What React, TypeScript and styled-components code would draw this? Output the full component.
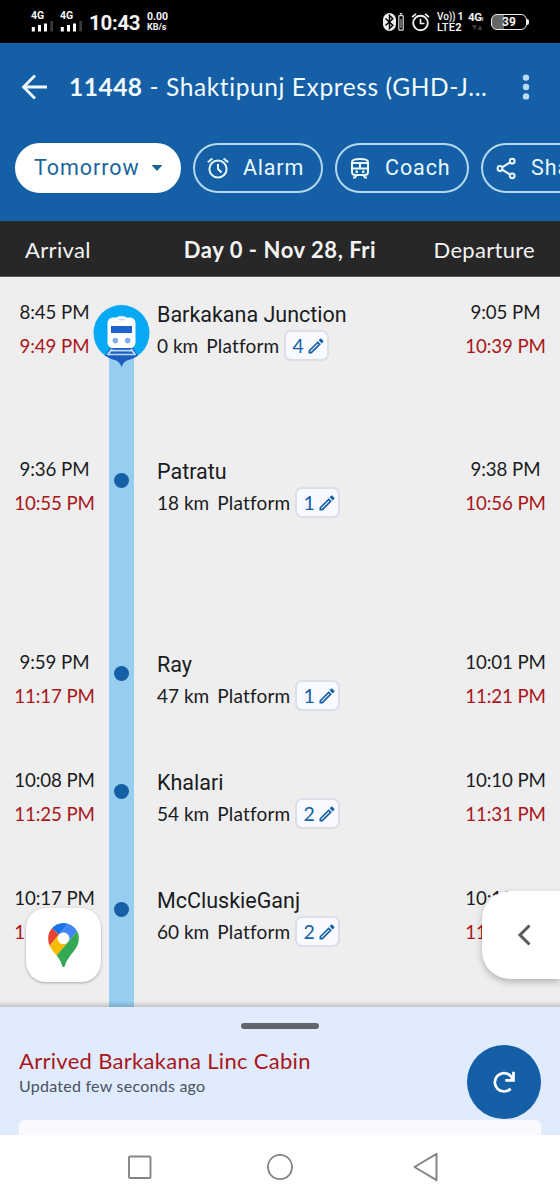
import React from "react";
import styled, { createGlobalStyle } from "styled-components";

const blue = "#145fa5";
const red = "#aa1519";
const ink = "#1a1b1e";

const GlobalStyle = createGlobalStyle`
  * { box-sizing: border-box; }
  body { margin: 0; background: #fff; font-family: Lato, "Noto Sans", sans-serif; }
  svg { display: block; flex: none; }
`;

const Screen = styled.div`
  width: 560px;
  height: 1200px;
  display: flex;
  flex-direction: column;
  overflow: hidden;
  white-space: nowrap;
`;

/* Text run with its own size, weight and tracking */
const Text = styled.span<{ $size: number; $ls?: number; $weight?: number; $color?: string; $roboto?: boolean }>`
  font-size: ${(p) => p.$size}px;
  letter-spacing: ${(p) => p.$ls ?? 0}px;
  font-weight: ${(p) => p.$weight ?? 400};
  color: ${(p) => p.$color ?? "inherit"};
  ${(p) => p.$roboto && "font-family: Roboto, sans-serif;"}
`;

/* ---------- status bar ---------- */
const StatusBar = styled.div`
  height: 43px;
  flex: none;
  background: #000;
  color: #f4f4f4;
  display: flex;
  align-items: center;
  justify-content: space-between;
  padding: 0 31px 0 31px;
  font-family: Roboto, sans-serif;
`;
const StatusGroup = styled.div`
  display: flex;
  align-items: center;
`;
const Signal = styled.div`
  width: 29px;
  display: flex;
  flex-direction: column;
  font: 700 10.5px/10px Roboto, sans-serif;
  margin-top: -1px;
`;
const Clock = styled.div`
  font: 700 20.5px/24px Roboto, sans-serif;
  letter-spacing: -0.3px;
  margin-top: 2px;
  width: 58px;
`;
const Stack = styled.div<{ $w: number; $size: number; $line?: number }>`
  width: ${(p) => p.$w}px;
  flex: none;
  display: flex;
  flex-direction: column;
  font: 700 ${(p) => p.$size}px/${(p) => p.$line ?? 10}px Roboto, sans-serif;
`;
const StackRow = styled.div`
  display: flex;
  align-items: center;
  gap: 2px;
  height: 11px;
`;
const StatusIcons = styled.svg`
  margin-right: 7px;
`;
const Battery = styled.div`
  width: 36px;
  height: 16px;
  border: 1.5px solid #eee;
  border-radius: 6px;
  background: linear-gradient(90deg, #666 0 34%, #000 34%);
  font: 700 12px/14px Roboto, sans-serif;
  text-align: center;
`;
const BatteryTip = styled.div`
  width: 2px;
  height: 6px;
  background: #eee;
  border-radius: 0 2px 2px 0;
`;

const SignalBars = () => (
  <svg width="22" height="11" viewBox="0 0 22 11">
    <rect x="0.8" y="6" width="3" height="4.5" fill="#fff" />
    <rect x="7" y="4" width="3" height="6.5" fill="#fff" />
    <rect x="13" y="2.5" width="3" height="8" fill="#fff" />
    <rect x="19.3" y="0" width="2.7" height="10.5" fill="#3a3a3a" />
  </svg>
);

/* ---------- app header ---------- */
const Header = styled.header`
  height: 178px;
  flex: none;
  background: ${blue};
  color: #f2fbff;
`;
const TitleRow = styled.div`
  height: 88px;
  display: flex;
  align-items: center;
  padding: 0 30px 0 21px;
`;
const Title = styled.h1`
  margin: 0 0 0 21px;
  flex: 1;
  line-height: 32px;
  font-weight: 400;
  display: flex;
`;
const Chips = styled.div`
  display: flex;
  gap: 12px;
  padding: 12px 0 0 15px;
`;
const Chip = styled.button<{ $w: number; $solid?: boolean }>`
  width: ${(p) => p.$w}px;
  height: 50px;
  flex: none;
  display: flex;
  align-items: center;
  border-radius: 25px;
  border: 2px solid ${(p) => (p.$solid ? "#fff" : "#b4d8ef")};
  background: ${(p) => (p.$solid ? "#fff" : "transparent")};
  color: ${(p) => (p.$solid ? "#1a659b" : "#e8f8ff")};
  padding: 0 0 1px ${(p) => (p.$solid ? 17 : 11)}px;
  gap: ${(p) => (p.$solid ? 11 : 13)}px;
`;

const Columns = styled.div`
  height: 56px;
  flex: none;
  background: #272727;
  border-bottom: 1px solid #555;
  color: #f4f4f4;
  display: grid;
  grid-template-columns: 1fr auto 1fr;
  align-items: center;
  padding: 1px 25px 0 25px;

  > :last-child {
    justify-self: end;
  }
`;

/* ---------- timeline ---------- */
const Timeline = styled.main`
  height: 730px;
  flex: none;
  background: #eee;
  overflow: hidden;
  position: relative;
  color: ${ink};
`;
const Stop = styled.section<{ $h: number }>`
  height: ${(p) => p.$h}px;
  display: grid;
  grid-template-columns: 109px 25px 1fr 109px;
`;
const Times = styled.div`
  padding-top: 18px;
  display: flex;
  flex-direction: column;
  align-items: center;
  line-height: 34px;
`;
const Track = styled.div<{ $first?: boolean }>`
  background: ${(p) => (p.$first ? "linear-gradient(#eee 60px, #97ceef 60px)" : "#97ceef")};
  display: flex;
  justify-content: center;
  align-items: flex-start;
  padding-top: ${(p) => (p.$first ? 27.5 : 39)}px;
`;
const Dot = styled.div`
  width: 15px;
  height: 15px;
  border-radius: 50%;
  background: ${blue};
`;
const Place = styled.div`
  padding: 21px 0 0 23px;
`;
const Name = styled.div`
  height: 32px;
  line-height: 34px;
`;
const Detail = styled.div`
  display: flex;
  align-items: center;
  gap: 8px;
  height: 31px;
`;
const Platform = styled.div`
  width: 45px;
  height: 31px;
  border: 2px solid #dcdfea;
  border-radius: 7px;
  background: #f9faff;
  color: ${blue};
  display: flex;
  align-items: center;
  justify-content: space-between;
  padding: 0 1px 0 6px;
  margin-left: -3px;
`;

const MapButton = styled.button`
  position: absolute;
  left: 26px;
  top: 631px;
  width: 75px;
  height: 74px;
  border: 0;
  border-radius: 20px;
  background: #fff;
  box-shadow: 0 1px 3px rgba(0, 0, 0, 0.3);
  display: flex;
  align-items: center;
  justify-content: center;
  padding: 0;
`;
const Drawer = styled.button`
  position: absolute;
  right: 0;
  top: 614px;
  width: 78px;
  height: 88px;
  border: 0;
  border-radius: 28px 0 0 28px;
  background: #fff;
  box-shadow: 0 3px 7px rgba(0, 0, 0, 0.25);
  padding: 0 0 0 34px;
`;
const Shade = styled.div`
  position: absolute;
  left: 0;
  right: 0;
  bottom: 0;
  height: 6px;
  background: linear-gradient(rgba(0, 0, 0, 0), rgba(0, 0, 0, 0.17));
`;

/* ---------- bottom sheet ---------- */
const Sheet = styled.section`
  height: 128px;
  flex: none;
  background: #e0ebfd;
  display: flex;
  flex-direction: column;
  padding: 16px 19px 0;
`;
const Handle = styled.div`
  width: 78px;
  height: 6px;
  border-radius: 3px;
  background: #62646b;
  align-self: center;
  flex: none;
`;
const Status = styled.div`
  display: flex;
  justify-content: space-between;
  height: 91px;
  flex: none;
`;
const Messages = styled.div`
  padding-top: 17px;
  display: flex;
  flex-direction: column;
  line-height: 30px;
`;
const Refresh = styled.button`
  width: 74px;
  height: 74px;
  margin-top: 16px;
  border: 0;
  border-radius: 50%;
  background: ${blue};
  padding: 0 0 0 26px;
`;
const NextCard = styled.div`
  flex: 1;
  background: #f8faff;
  border-radius: 6px 6px 0 0;
`;
const NavBar = styled.nav`
  height: 65px;
  flex: none;
  background: #fff;
  display: grid;
  grid-template-columns: 140px 146px 26px;
  align-items: center;
  padding: 0 0 1px 127px;
`;
const Line = styled.span`
  line-height: 20px;
`;

const TrainMarker = () => (
  <svg width="57" height="63" viewBox="0 0 57 63">
    <defs>
      <clipPath id="disc">
        <circle cx="28.5" cy="28" r="28" />
      </clipPath>
    </defs>
    <circle cx="28.5" cy="28" r="28" fill="#08a9f4" />
    <path d="M20 54 Q26.500 56 28.5 62 Q30.500 56 37 54Z" fill="#1d5fc0" />
    <g clipPath="url(#disc)">
      <path d="M7 58 L17 43 H40 L50 58Z" fill="#1d5fc0" />
    </g>
    <path d="M19 44 L14.500 50 M38 44 L42.500 50" stroke="#b9d8fb" strokeWidth="2" />
    <path d="M17.500 45.700 H39.500 M15 49.500 H42" stroke="#b9d8fb" strokeWidth="1.700" />
    <rect x="14.5" y="12.500" width="28" height="30.500" rx="5.5" fill="#fff" />
    <rect x="24" y="11.300" width="9" height="4" rx="2" fill="#fff" />
    <rect x="25.5" y="14" width="6" height="1.3" fill="#b6d5ee" />
    <rect x="18" y="21" width="21" height="7" fill="#1d62cf" />
    <circle cx="22.3" cy="35.6" r="2.8" fill="#80aee8" />
    <circle cx="34.7" cy="35.6" r="2.8" fill="#80aee8" />
  </svg>
);

const Pencil = () => (
  <svg width="20" height="20" viewBox="0 0 24 24" fill={blue}>
    <path d="M14.06,9L15,9.94L5.92,19H5V18.08L14.06,9M17.66,3C17.41,3 17.15,3.1 16.96,3.29L15.13,5.12L18.88,8.87L20.71,7.04C21.1,6.65 21.1,6 20.71,5.63L18.37,3.29C18.17,3.09 17.92,3 17.66,3M14.06,6.19L3,17.25V21H6.75L17.81,9.94L14.06,6.19Z" />
  </svg>
);

const MapsPin = () => (
  <svg width="31" height="44" viewBox="0 0 92.3 132.3">
    <path fill="#1a73e8" d="M60.2 2.2C55.8.8 51 0 46.1 0 32 0 19.3 6.4 10.8 16.5l21.8 18.3L60.2 2.2z" />
    <path fill="#ea4335" d="M10.8 16.5C4.1 24.5 0 34.9 0 46.1c0 8.7 1.7 15.7 4.6 22l28-33.3-21.8-18.3z" />
    <path fill="#4285f4" d="M46.2 28.5c9.8 0 17.7 7.9 17.7 17.7 0 4.3-1.6 8.3-4.2 11.4 0 0 13.9-16.6 27.5-32.7-5.6-10.8-15.3-19-27-22.7L32.6 34.8c3.3-3.8 8.1-6.3 13.6-6.3" />
    <path fill="#fbbc04" d="M46.2 63.8c-9.8 0-17.7-7.9-17.7-17.7 0-4.3 1.5-8.3 4.1-11.3l-28 33.3c4.8 10.6 12.8 19.2 21 29.9l34.1-40.5c-3.3 3.9-8.1 6.3-13.5 6.3" />
    <path fill="#34a853" d="M59.1 109.2c15.4-24.1 33.3-35 33.3-63 0-7.7-1.9-14.9-5.2-21.3L25.6 98c2.6 3.4 5.3 7.3 7.9 11.3 9.4 14.5 6.8 23.1 12.8 23.1s3.4-8.7 12.8-23.2" />
  </svg>
);

const stops = [
  { h: 157, a: "8:45 PM", ar: "9:49 PM", d: "9:05 PM", dr: "10:39 PM", name: "Barkakana Junction", km: "0 km", pf: "4" },
  { h: 193, a: "9:36 PM", ar: "10:55 PM", d: "9:38 PM", dr: "10:56 PM", name: "Patratu", km: "18 km", pf: "1" },
  { h: 118, a: "9:59 PM", ar: "11:17 PM", d: "10:01 PM", dr: "11:21 PM", name: "Ray", km: "47 km", pf: "1" },
  { h: 118, a: "10:08 PM", ar: "11:25 PM", d: "10:10 PM", dr: "11:31 PM", name: "Khalari", km: "54 km", pf: "2" },
  { h: 144, a: "10:17 PM", ar: "11:34 PM", d: "10:19 PM", dr: "11:36 PM", name: "McCluskieGanj", km: "60 km", pf: "2" },
];

export default function App() {
  return (
    <Screen>
      <GlobalStyle />
      <StatusBar>
        <StatusGroup>
          <Signal>4G<SignalBars /></Signal>
          <Signal>4G<SignalBars /></Signal>
          <Clock>10:43</Clock>
          <Stack $w={30} $size={10.5}>
            <span>0.00</span>
            <Text $size={9} $weight={700}>KB/s</Text>
          </Stack>
        </StatusGroup>
        <StatusGroup>
          <StatusIcons width="48" height="20" viewBox="0 0 48 20">
            <rect x="1" y="1" width="13" height="18" rx="6.5" fill="#eee" />
            <path d="M3.500 6.500 L10.800 13.300 L7.500 16.500 V3.500 L10.800 6.700 L3.500 13.500" fill="none" stroke="#000" strokeWidth="1.5" />
            <rect x="16.800" y="3.600" width="4.4" height="14.600" rx="0.800" fill="none" stroke="#ddd" strokeWidth="1.2" />
            <path d="M17.800 1.800h2.4" stroke="#ddd" strokeWidth="1.6" />
            <path d="M19 7v9" stroke="#aaa" strokeWidth="1.2" />
            <circle cx="38.500" cy="11" r="7.300" fill="none" stroke="#eee" strokeWidth="1.9" />
            <path d="M38.500 6.800v4.700h4M30 5.200l4-3.400M47 5.200l-4-3.400" fill="none" stroke="#eee" strokeWidth="1.7" />
          </StatusIcons>
          <Stack $w={31} $size={10.5} $line={11}>
            <StackRow>
              <Text $size={10} $weight={500} $ls={-0.1}>Vo))</Text>
              <span>1</span>
            </StackRow>
            <Text $size={11} $weight={500} $ls={0.2}>LTE<b>2</b></Text>
          </Stack>
          <Stack $w={23} $size={11}>
            <Text $size={11.5} $weight={700} $ls={-0.4}>4G<Text $size={7}>ı</Text></Text>
            <svg width="16" height="8" viewBox="0 0 16 8" fill="#3c3c3c"><path d="M4 1h5l-2.5 5zM9.500 6h5l-2.500-5z" /></svg>
          </Stack>
          <Battery>39</Battery>
          <BatteryTip />
        </StatusGroup>
      </StatusBar>

      <Header>
        <TitleRow>
          <svg width="27" height="26" viewBox="0 0 27 26" fill="none" stroke="#f2fbff" strokeWidth="2.8">
            <path d="M26 13H3M14 1.500L2.500 13L14 24.500" />
          </svg>
          <Title>
            <Text as="b" $size={24.5} $weight={700} $ls={0.5}>11448</Text>
            <Text $size={24.5} $ls={0.6}>&nbsp;- Shaktipunj Express (GHD-J...</Text>
          </Title>
          <svg width="8" height="26" viewBox="0 0 8 26" fill="#b9dcf5">
            <circle cx="4" cy="3.600" r="3.200" /><circle cx="4" cy="13" r="3.200" /><circle cx="4" cy="22.400" r="3.200" />
          </svg>
        </TitleRow>
        <Chips>
          <Chip $w={166} $solid>
            <Text $roboto $size={21.5} $ls={0.95}>Tomorrow</Text>
            <svg width="12" height="6" viewBox="0 0 12 6"><path d="M0.500 0h11L6 6z" fill="#1a659b" /></svg>
          </Chip>
          <Chip $w={130}>
            <svg width="24" height="24" viewBox="0 0 24 24" fill="none" stroke="#e8f8ff" strokeWidth="2">
              <circle cx="12" cy="13" r="8.600" />
              <path d="M12 8v5l3.500 3.500M1.800 6.300l4.600-3.900M22.200 6.300l-4.600-3.900" />
            </svg>
            <Text $roboto $size={21.5} $ls={0.8}>Alarm</Text>
          </Chip>
          <Chip $w={134}>
            <svg width="24" height="24" viewBox="0 0 24 24" fill="none" stroke="#e8f8ff" strokeWidth="2">
              <path d="M4 16V6Q4 3 12 3T20 6V16Q20 19 17 19H7Q4 19 4 16Z" />
              <path d="M5 7h14M5 12.500h14M12 7v5.500M8.500 19.500l-1.500 2H5M15.500 19.500l1.500 2H19" />
              <path d="M7.500 15.700h2.400M14.100 15.700h2.400" strokeWidth="2.400" />
            </svg>
            <Text $roboto $size={21.5} $ls={0.9}>Coach</Text>
          </Chip>
          <Chip $w={130}>
            <svg width="24" height="24" viewBox="0 0 24 24" fill="none" stroke="#e8f8ff" strokeWidth="2">
              <circle cx="18.200" cy="5.200" r="2.400" /><circle cx="6" cy="12.500" r="2.400" /><circle cx="18.200" cy="19.800" r="2.400" />
              <path d="M8 11.300l8.100-4.900M8 13.700l8.100 4.900" />
            </svg>
            <Text $roboto $size={21.5} $ls={0.9}>Share</Text>
          </Chip>
        </Chips>
      </Header>

      <Columns>
        <Text $size={22} $ls={0.35}>Arrival</Text>
        <Text $size={22} $weight={700} $ls={0.55}>Day 0 - Nov 28, Fri</Text>
        <Text $size={22} $ls={0.3}>Departure</Text>
      </Columns>

      <Timeline>
        {stops.map((s, i) => (
          <Stop key={s.name} $h={s.h}>
            <Times>
              <Text $size={18.7} $ls={-0.1}>{s.a}</Text>
              <Text $size={18.7} $ls={-0.1} $color={red}>{s.ar}</Text>
            </Times>
            <Track $first={i === 0}>{i === 0 ? <TrainMarker /> : <Dot />}</Track>
            <Place>
              <Name><Text $roboto $size={21.5}>{s.name}</Text></Name>
              <Detail>
                <Text $size={19} $ls={0}>{s.km}</Text>
                <Text $size={19} $ls={0.2}>Platform</Text>
                <Platform><Text $size={19.5}>{s.pf}</Text><Pencil /></Platform>
              </Detail>
            </Place>
            <Times>
              <Text $size={18.7} $ls={-0.1}>{s.d}</Text>
              <Text $size={18.7} $ls={-0.1} $color={red}>{s.dr}</Text>
            </Times>
          </Stop>
        ))}
        <MapButton aria-label="Map"><MapsPin /></MapButton>
        <Drawer aria-label="Open panel">
          <svg width="16" height="22" viewBox="0 0 16 22" fill="none" stroke="#58595c" strokeWidth="3">
            <path d="M13.500 1.500L4 11L13.500 20.500" />
          </svg>
        </Drawer>
        <Shade />
      </Timeline>

      <Sheet>
        <Handle />
        <Status>
          <Messages>
            <Text $size={22} $ls={0.3} $color={red}>Arrived Barkakana Linc Cabin</Text>
            <Line><Text $size={16} $ls={0.25} $color="#4a5260">Updated few seconds ago</Text></Line>
          </Messages>
          <Refresh aria-label="Refresh">
            <svg width="23" height="23" viewBox="0 0 23 23" fill="none" stroke="#fff" strokeWidth="2.700">
              <path d="M17.600 17.700A9.200 9.200 0 1 1 17.200 4.500L20 8.500" />
              <path d="M20.500 0.700V9.300H12.300" />
            </svg>
          </Refresh>
        </Status>
        <NextCard />
      </Sheet>

      <NavBar>
        <svg width="25" height="28" viewBox="0 0 25 28" fill="none" stroke="#858585" strokeWidth="1.900"><rect x="2" y="3.500" width="21.500" height="21.500" rx="1" /></svg>
        <svg width="26" height="28" viewBox="0 0 26 28" fill="none" stroke="#858585" strokeWidth="1.900"><circle cx="13" cy="14" r="12.100" /></svg>
        <svg width="26" height="30" viewBox="0 0 26 30" fill="none" stroke="#858585" strokeWidth="2" strokeLinejoin="round"><path d="M1.500 15L23.500 1.800V28.200Z" /></svg>
      </NavBar>
    </Screen>
  );
}
